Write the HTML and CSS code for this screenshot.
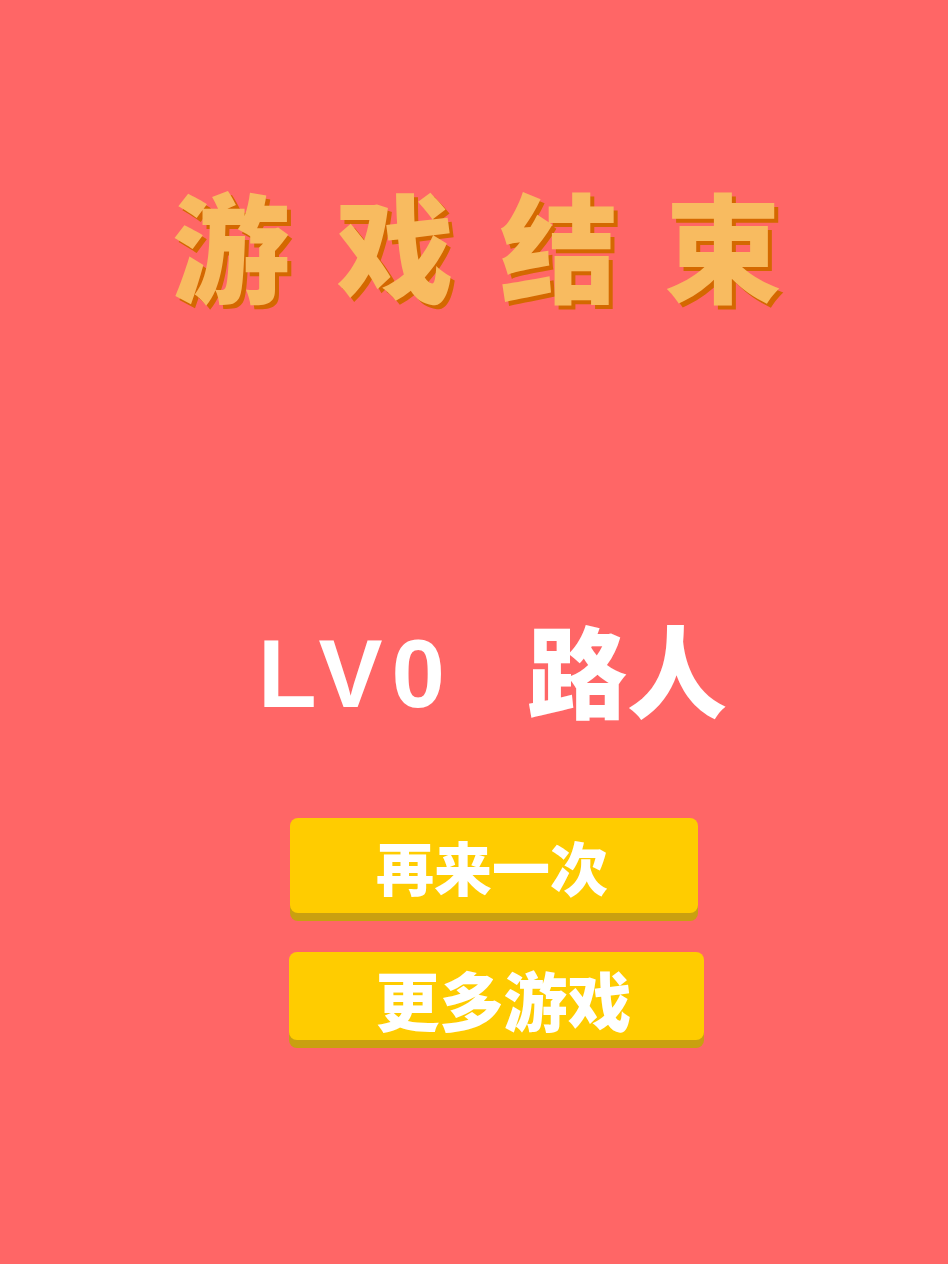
FILE: index.html
```html
<!DOCTYPE html>
<html lang="zh-CN">
<head>
<meta charset="utf-8">
<title>游戏结束</title>
<link rel="stylesheet" href="styles.css">
</head>
<body>
<main class="screen">
  <h1 class="title">游戏结束</h1>
  <div class="level">
    <span class="lv">LV0</span>
    <span class="rank">路人</span>
  </div>
  <div class="buttons">
    <button class="btn btn-again">再来一次</button>
    <button class="btn btn-more">更多游戏</button>
  </div>
</main>
</body>
</html>
```

FILE: styles.css
```css
html, body {
  margin: 0;
  padding: 0;
  background: #ff6666;
}
.screen {
  width: 948px;
  height: 1264px;
  display: flex;
  flex-direction: column;
  align-items: center;
  font-family: "Noto Sans CJK SC", "Noto Sans", sans-serif;
}
.title {
  margin: 173px 0 0 52px;
  font-size: 118px;
  line-height: 140px;
  font-weight: 900;
  letter-spacing: 46px;
  color: #f8bb60;
  text-shadow: 4px 4px 0 #d46800;
}
.level {
  margin-top: 299px;
  display: flex;
  align-items: center;
  gap: 73px;
  margin-left: 37px;
  color: #ffffff;
  height: 110px;
}
.lv {
  font-family: "Liberation Sans", Arial, sans-serif;
  font-weight: 700;
  font-size: 96px;
  letter-spacing: 9px;
  margin-top: 14px;
}
.rank {
  font-size: 100px;
  font-weight: 900;
}
.buttons {
  margin-top: 96px;
  display: flex;
  flex-direction: column;
  align-items: center;
  gap: 39px;
}
.btn {
  border: 0;
  border-radius: 8px;
  background: #ffcc00;
  color: #ffffff;
  font-family: "Noto Sans CJK SC", "Noto Sans", sans-serif;
  font-weight: 900;
  text-align: left;
  box-shadow: 0 8px 0 #c9a010;
}
.btn-again {
  width: 408px;
  height: 95px;
  padding: 0 0 0 86px;
  font-size: 58px;
  margin-left: 40px;
}
.btn-more {
  width: 415px;
  height: 88px;
  padding: 0 0 0 87px;
  font-size: 64px;
  margin-left: 44px;
}
```
